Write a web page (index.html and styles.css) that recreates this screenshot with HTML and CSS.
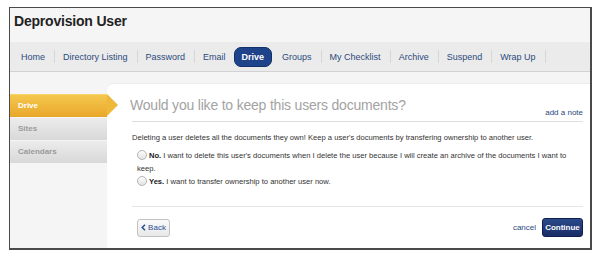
FILE: index.html
```html
<!DOCTYPE html>
<html lang="en">
<head>
    <meta charset="UTF-8">
    <title>Deprovision User</title>
    <link rel="stylesheet" href="styles.css">
</head>
<body>
    <div class="frame">
        <div class="header">
            <h1>Deprovision User</h1>
        </div>
        <div class="nav">
            <a class="nav-item">Home</a>
            <span class="sep"></span>
            <a class="nav-item">Directory Listing</a>
            <span class="sep"></span>
            <a class="nav-item">Password</a>
            <span class="sep"></span>
            <a class="nav-item">Email</a>
            <a class="nav-item active">Drive</a>
            <a class="nav-item">Groups</a>
            <span class="sep"></span>
            <a class="nav-item">My Checklist</a>
            <span class="sep"></span>
            <a class="nav-item">Archive</a>
            <span class="sep"></span>
            <a class="nav-item">Suspend</a>
            <span class="sep"></span>
            <a class="nav-item">Wrap Up</a>
            <span class="sep"></span>
        </div>
        <div class="main">
            <div class="sidebar">
                <div class="tab current">Drive</div>
                <div class="tab">Sites</div>
                <div class="tab">Calendars</div>
            </div>
            <div class="panel">
                <div class="panel-head">
                    <h2>Would you like to keep this users documents?</h2>
                    <a class="note">add a note</a>
                </div>
                <p class="intro">Deleting a user deletes all the documents they own! Keep a user's documents by transfering ownership to another user.</p>
                <div class="options">
                    <label class="option"><span class="radio"></span><b>No.</b> I want to delete this user's documents when I delete the user because I will create an archive of the documents I want to keep.</label>
                    <label class="option"><span class="radio"></span><b>Yes.</b> I want to transfer ownership to another user now.</label>
                </div>
                <div class="actions">
                    <button class="btn-back">
                        <svg width="5" height="7" viewBox="0 0 5 7"><path d="M4 0.8 L1.2 3.5 L4 6.2" fill="none" stroke="#2a4f94" stroke-width="1.5"/></svg>
                        Back
                    </button>
                    <div class="right">
                        <a class="cancel">cancel</a>
                        <button class="btn-continue">Continue</button>
                    </div>
                </div>
            </div>
        </div>
    </div>
</body>
</html>
```

FILE: styles.css
```css
body, html {
    margin: 0;
    padding: 0;
}
body {
    background: #fff;
    font-family: 'Liberation Sans', Arial, Helvetica, sans-serif;
    color: #333;
}
.frame {
    margin: 7px 0 0 9px;
    width: 580px;
    height: 240px;
    border: 1px solid #4a4a4a;
    border-width: 1px 2px 2px 1px;
    background: #f5f5f5;
    display: flex;
    flex-direction: column;
    overflow: hidden;
}
.header {
    height: 34px;
    padding: 4px 0 0 4px;
    box-sizing: border-box;
    background: #f5f5f5;
}
h1 {
    margin: 0;
    font-size: 14px;
    line-height: 18px;
    font-weight: bold;
    color: #222;
    letter-spacing: -0.2px;
}
.nav {
    height: 29px;
    background: #ebebeb;
    border-bottom: 1px solid #d2d2d2;
    display: flex;
    align-items: center;
    padding-left: 11px;
}
.nav-item {
    font-size: 9px;
    color: #2b4a7c;
    padding: 0 9px 0 0;
    white-space: nowrap;
}
.sep {
    width: 1px;
    height: 13px;
    background: #d6d6d6;
    margin-right: 8px;
}
.nav-item.active {
    background: #1f438a;
    border: 1px solid #13306a;
    color: #fff;
    font-weight: bold;
    border-radius: 7px;
    padding: 0 7px;
    height: 18px;
    line-height: 18px;
    margin: 0 10px 0 -1px;
}
.main {
    flex: 1;
    display: flex;
    padding-top: 11px;
}
.sidebar {
    width: 97px;
    padding-top: 11px;
}
.tab {
    height: 22px;
    line-height: 22px;
    padding-left: 8px;
    font-size: 8px;
    font-weight: bold;
    color: #9a9a9a;
    background: linear-gradient(#ececec, #d8d8d8);
    border-top: 1px solid #f6f6f6;
    position: relative;
}
.tab.current {
    color: #fff;
    background: linear-gradient(#f5c84e, #e8a72a);
    border-top-color: #f7d36c;
}
.tab.current::after {
    content: "";
    position: absolute;
    right: -11px;
    top: -1px;
    border-style: solid;
    border-width: 11.5px 0 11.5px 11px;
    border-color: transparent transparent transparent #eeb83a;
}
.panel {
    flex: 1;
    background: #fff;
    border-top-left-radius: 7px;
    border-top: 1px solid #ececec;
    padding: 0 7px 0 25px;
    display: flex;
    flex-direction: column;
}
.panel-head {
    height: 37px;
    border-bottom: 1px solid #dedede;
    display: flex;
    justify-content: space-between;
    align-items: flex-end;
}
h2 {
    margin: 0 0 8px -2px;
    font-size: 14px;
    font-weight: normal;
    color: #a3a3a3;
    letter-spacing: -0.2px;
}
.note {
    font-size: 8px;
    color: #2b4a7c;
    margin-bottom: 4px;
}
.intro {
    font-size: 7.6px;
    margin: 11px 0 7px;
    color: #333;
}
.options {
    display: flex;
    flex-direction: column;
}
.option {
    display: block;
    font-size: 7.6px;
    line-height: 13px;
    margin-left: 5px;
}
.option b {
    color: #222;
}
.radio {
    display: inline-block;
    vertical-align: -2px;
    width: 8px;
    height: 8px;
    border: 1px solid #b5b5b5;
    border-radius: 50%;
    background: linear-gradient(#fdfdfd, #e3e3e3);
    margin-right: 2px;
}
.actions {
    margin-top: 18px;
    border-top: 1px solid #e6e6e6;
    padding: 11px 0 0 5px;
    display: flex;
    justify-content: space-between;
    align-items: center;
}
.btn-back {
    font-family: inherit;
    font-size: 8px;
    color: #2a4f94;
    height: 18px;
    width: 33px;
    padding: 0;
    border: 1px solid #c2c2c2;
    border-radius: 3px;
    background: linear-gradient(#fafafa, #e8e8e8);
    display: flex;
    align-items: center;
    justify-content: center;
    gap: 2px;
}
.right {
    display: flex;
    align-items: center;
    gap: 6px;
}
.cancel {
    font-size: 8px;
    color: #2b4a7c;
}
.btn-continue {
    font-family: inherit;
    font-size: 8px;
    font-weight: bold;
    color: #fff;
    height: 19px;
    width: 41px;
    padding: 0;
    border: 1px solid #111f4e;
    border-radius: 3px;
    background: linear-gradient(#2a4a8a, #1a2d66);
}
```
